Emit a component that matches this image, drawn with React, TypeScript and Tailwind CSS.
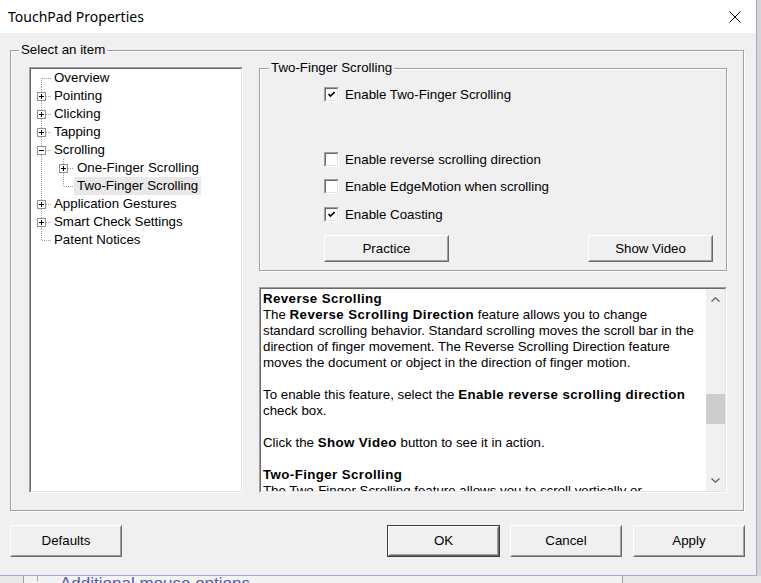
import React from "react";

type TreeItem = {
  label: string;
  level: 0 | 1;
  expander?: "+" | "-";
  selected?: boolean;
};

const treeItems: TreeItem[] = [
  { label: "Overview", level: 0 },
  { label: "Pointing", level: 0, expander: "+" },
  { label: "Clicking", level: 0, expander: "+" },
  { label: "Tapping", level: 0, expander: "+" },
  { label: "Scrolling", level: 0, expander: "-" },
  { label: "One-Finger Scrolling", level: 1, expander: "+" },
  { label: "Two-Finger Scrolling", level: 1, selected: true },
  { label: "Application Gestures", level: 0, expander: "+" },
  { label: "Smart Check Settings", level: 0, expander: "+" },
  { label: "Patent Notices", level: 0 },
];

// classic 3D edges: outer + inner frame
const sunkenOuter =
  "border border-t-[#a0a0a0] border-l-[#a0a0a0] border-r-white border-b-white";
const sunkenInner =
  "border border-t-[#696969] border-l-[#696969] border-r-[#e3e3e3] border-b-[#e3e3e3]";

const Expander: React.FC<{ cx: number; sign: "+" | "-" }> = ({ cx, sign }) => (
  <>
    <rect x={cx - 4} y={5.5} width={8} height={8} fill="#fff" stroke="#919191" />
    <line x1={cx - 2.5} x2={cx + 2.5} y1={9.5} y2={9.5} stroke="#000" />
    {sign === "+" && <line x1={cx} x2={cx} y1={7} y2={12} stroke="#000" />}
  </>
);

const TreeRow: React.FC<{ item: TreeItem; index: number }> = ({ item, index }) => {
  const first = index === 0;
  const last = index === treeItems.length - 1;
  const gutter = item.level === 0 ? 20 : 43;
  const lastChild = item.level === 1 && treeItems[index + 1]?.level !== 1;
  const dots = { stroke: "#a0a0a0", strokeDasharray: "1 1", shapeRendering: "crispEdges" as const };

  return (
    <div className="flex h-[18px] items-center">
      <svg width={gutter} height={18} className="shrink-0">
        {/* root connector */}
        <line x1={10.5} x2={10.5} y1={first ? 9 : 0} y2={last ? 10 : 18} {...dots} />
        {item.level === 0 && <line x1={11} x2={20} y1={9.5} y2={9.5} {...dots} />}
        {item.level === 1 && (
          <>
            <line x1={32.5} x2={32.5} y1={0} y2={lastChild ? 10 : 18} {...dots} />
            <line x1={33} x2={43} y1={9.5} y2={9.5} {...dots} />
          </>
        )}
        {item.expander && (
          <Expander cx={item.level === 0 ? 10.5 : 32.5} sign={item.expander} />
        )}
      </svg>
      <span
        className={`h-[18px] px-[3px] leading-[18px] whitespace-nowrap ${
          item.selected ? "bg-[#e8e8e8]" : ""
        }`}
      >
        {item.label}
      </span>
    </div>
  );
};

const CheckBox: React.FC<{ checked?: boolean; label: string; className?: string }> = ({
  checked,
  label,
  className = "",
}) => (
  <div className={`flex h-[15px] items-center ${className}`}>
    <span className={`h-[15px] w-[15px] shrink-0 ${sunkenOuter}`}>
      <span className={`flex h-full w-full items-center justify-center bg-white ${sunkenInner}`}>
        {checked && (
          <svg width="7" height="7" viewBox="0 0 7 7">
            <path d="M0.5 3 L2.5 5.2 L6.5 1" fill="none" stroke="#000" strokeWidth="1.6" />
          </svg>
        )}
      </span>
    </span>
    <span className="ml-[6px] whitespace-nowrap">{label}</span>
  </div>
);

const WinButton: React.FC<{ label: string; className?: string; isDefault?: boolean }> = ({
  label,
  className = "",
  isDefault,
}) => (
  <div className={`${isDefault ? "border border-[#3c3c3c]" : ""} ${className}`}>
    <div className="h-full border border-t-white border-l-white border-r-[#696969] border-b-[#696969]">
      <div className="flex h-full items-center justify-center border border-t-[#f0f0f0] border-l-[#f0f0f0] border-r-[#a0a0a0] border-b-[#a0a0a0] bg-[#f0f0f0]">
        {label}
      </div>
    </div>
  </div>
);

const Chevron: React.FC<{ down?: boolean }> = ({ down }) => (
  <svg width="9" height="5" viewBox="0 0 9 5" className={down ? "rotate-180" : ""}>
    <path d="M0.5 4.5 L4.5 0.8 L8.5 4.5" fill="none" stroke="#606060" strokeWidth="1.3" />
  </svg>
);

const HelpText = () => (
  <div className="min-w-0 flex-1 overflow-hidden whitespace-nowrap pl-[2px] pt-[2px] leading-[16px]">
    <div className="font-bold tracking-[0.4px]">Reverse Scrolling</div>
    <div>
      The <b className="tracking-[0.4px]">Reverse Scrolling Direction</b> feature allows you to change
    </div>
    <div>standard scrolling behavior. Standard scrolling moves the scroll bar in the</div>
    <div>direction of finger movement. The Reverse Scrolling Direction feature</div>
    <div>moves the document or object in the direction of finger motion.</div>
    <div className="h-[16px]" />
    <div>
      To enable this feature, select the{" "}
      <b className="tracking-[0.4px]">Enable reverse scrolling direction</b>
    </div>
    <div>check box.</div>
    <div className="h-[16px]" />
    <div>
      Click the <b className="tracking-[0.4px]">Show Video</b> button to see it in action.
    </div>
    <div className="h-[16px]" />
    <div className="font-bold tracking-[0.4px]">Two-Finger Scrolling</div>
    <div>The Two-Finger Scrolling feature allows you to scroll vertically or</div>
  </div>
);

export default function App() {
  return (
    <div className="h-[583px] w-[761px] overflow-hidden bg-[#e9e9e9] font-['Liberation_Sans',Arial,sans-serif] text-[13.3px] text-black">
      <div className="flex">
        <div className="flex h-[576px] w-[757px] flex-col border-r border-b border-[#a3a6dc] bg-[#f0f0f0]">
          {/* title bar */}
          <div className="flex h-[33px] shrink-0 items-center bg-white">
            <span className="pl-[8px] font-['Noto_Sans',sans-serif] text-[14px]">
              TouchPad Properties
            </span>
            <svg width="12" height="12" className="ml-auto mr-[15px]">
              <path d="M0.5 0.5 L11.5 11.5 M11.5 0.5 L0.5 11.5" stroke="#000" strokeWidth="1" />
            </svg>
          </div>

          <div className="flex flex-1 flex-col pl-[10px] pr-[12px]">
            {/* Select an item */}
            <div className="relative mt-[17px] h-[461px] shrink-0 border border-[#a0a0a0] shadow-[inset_1px_1px_0_#fff,1px_1px_0_#fff]">
              <span className="absolute top-[-9px] left-[8px] bg-[#f0f0f0] px-[2px] leading-[16px]">
                Select an item
              </span>
              <div className="flex h-full gap-[16px] pt-[16px] pr-[16px] pb-[17px] pl-[18px]">
                <div className={`w-[214px] shrink-0 ${sunkenOuter}`}>
                  <div className={`h-full bg-white ${sunkenInner}`}>
                    {treeItems.map((item, i) => (
                      <TreeRow key={item.label} item={item} index={i} />
                    ))}
                  </div>
                </div>

                <div className="flex min-h-0 flex-1 flex-col">
                  {/* Two-Finger Scrolling */}
                  <div className="relative mt-[1px] h-[203px] shrink-0 border border-[#a0a0a0] shadow-[inset_1px_1px_0_#fff,1px_1px_0_#fff]">
                    <span className="absolute top-[-9px] left-[9px] bg-[#f0f0f0] px-[2px] leading-[16px]">
                      Two-Finger Scrolling
                    </span>
                    <div className="flex flex-col pt-[18px] pl-[64px]">
                      <CheckBox checked label="Enable Two-Finger Scrolling" />
                      <CheckBox className="mt-[50px]" label="Enable reverse scrolling direction" />
                      <CheckBox className="mt-[12px]" label="Enable EdgeMotion when scrolling" />
                      <CheckBox className="mt-[13px]" checked label="Enable Coasting" />
                      <div className="mt-[13px] flex justify-between pr-[13px]">
                        <WinButton label="Practice" className="h-[27px] w-[125px]" />
                        <WinButton label="Show Video" className="h-[27px] w-[125px]" />
                      </div>
                    </div>
                  </div>

                  {/* help pane */}
                  <div className={`mt-[16px] min-h-0 flex-1 ${sunkenOuter}`}>
                    <div className={`flex h-full bg-white ${sunkenInner}`}>
                      <HelpText />
                      <div className="flex w-[19px] shrink-0 flex-col bg-[#f0f0f0]">
                        <div className="flex h-[17px] items-center justify-center pt-[4px]">
                          <Chevron />
                        </div>
                        <div className="flex-1">
                          <div className="mt-[88px] h-[30px] bg-[#cdcdcd]" />
                        </div>
                        <div className="flex h-[17px] items-center justify-center pb-[4px]">
                          <Chevron down />
                        </div>
                      </div>
                    </div>
                  </div>
                </div>
              </div>
            </div>

            {/* dialog buttons */}
            <div className="mt-[14px] mr-[-1px] flex">
              <WinButton label="Defaults" className="h-[32px] w-[112px]" />
              <div className="ml-auto flex">
                <WinButton label="OK" isDefault className="h-[32px] w-[113px]" />
                <WinButton label="Cancel" className="ml-[10px] h-[32px] w-[112px]" />
                <WinButton label="Apply" className="ml-[11px] h-[32px] w-[112px]" />
              </div>
            </div>
          </div>
        </div>
        <div className="w-[4px] bg-[#d6d6d6]" />
      </div>

      {/* window underneath */}
      <div className="flex h-[7px] overflow-hidden">
        <div className="w-[23px] shrink-0" />
        <div className="w-[600px] border-x border-[#a0a0a0] bg-[#f3f3f3] pl-[13px]">
          <div className="h-full border-l border-[#a0a0a0] pl-[22px]">
            <div className="mt-[-2px] whitespace-nowrap text-[17px] leading-[20px] text-[#5b58a8]">
              Additional mouse options
            </div>
          </div>
        </div>
      </div>
    </div>
  );
}
